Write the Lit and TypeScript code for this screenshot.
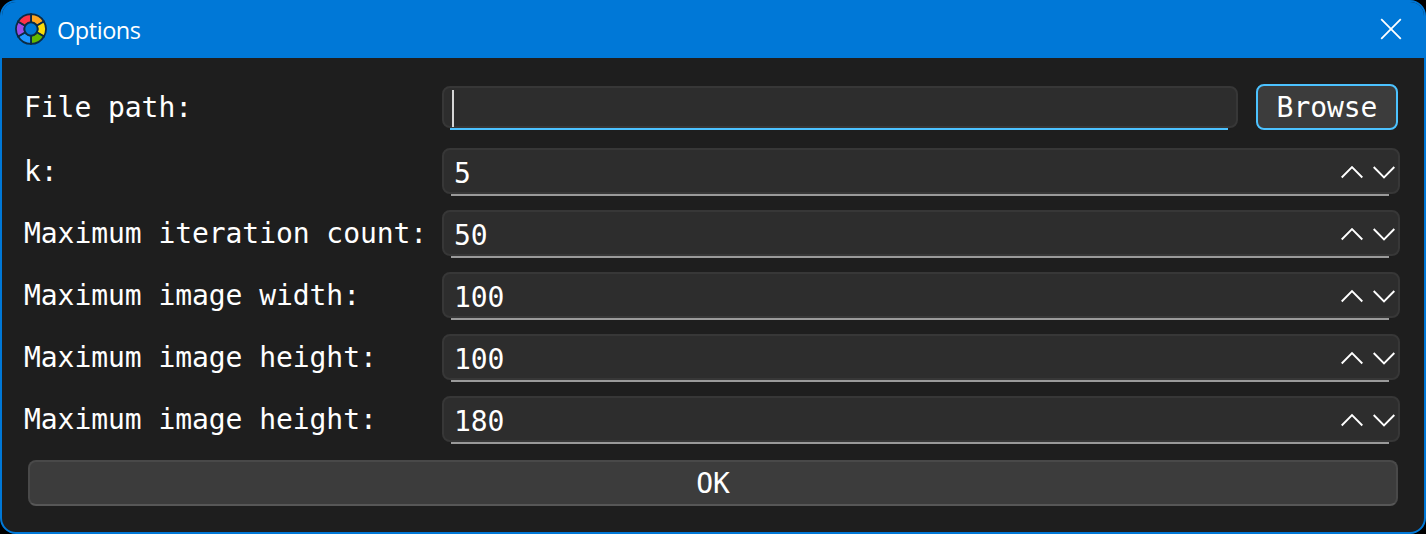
import { LitElement, html, css, svg } from "lit";
import { customElement, property } from "lit/decorators.js";

const ring = [
  ["#ffa51f", 0],
  ["#fbdc0a", 60],
  ["#63b800", 120],
  ["#1e96ff", 180],
  ["#9d4de8", 240],
  ["#ff3347", 300],
] as const;

function slice(start: number) {
  const point = (r: number, deg: number) => {
    const a = ((deg - 90) * Math.PI) / 180;
    return `${(16 + r * Math.cos(a)).toFixed(2)} ${(16 + r * Math.sin(a)).toFixed(2)}`;
  };
  const end = start + 60;
  return `M${point(6.6, start)} L${point(14.9, start)} A14.9 14.9 0 0 1 ${point(14.9, end)} L${point(6.6, end)} A6.6 6.6 0 0 0 ${point(6.6, start)}Z`;
}

@customElement("spin-field")
export class SpinField extends LitElement {
  @property() value = "";

  static styles = css`
    :host { display: block; height: 48px; }
    .box {
      box-sizing: border-box;
      height: 46px;
      border: 2px solid #373737;
      border-radius: 8px;
      background: #2d2d2d;
      display: flex;
      align-items: center;
      justify-content: space-between;
      padding: 0 2px 0 10px;
    }
    .value { box-sizing: border-box; height: 42px; padding-top: 5px; line-height: 38px; }
    .arrows { display: flex; gap: 8px; padding-top: 2px; }
    .arrows svg { display: block; width: 24px; height: 14px; }
    .line { height: 2px; margin: 0 11px 0 9px; background: #9a9a9a; }
  `;

  render() {
    return html`
      <div class="box">
        <span class="value">${this.value}</span>
        <span class="arrows">
          <svg viewBox="0 0 24 14" fill="none" stroke="#fff" stroke-width="1.9"><path d="M1.7 12.5 12 2.2 22.3 12.5" /></svg>
          <svg viewBox="0 0 24 14" fill="none" stroke="#fff" stroke-width="1.9"><path d="M1.7 2 12 12.3 22.3 2" /></svg>
        </span>
      </div>
      <div class="line"></div>
    `;
  }
}

@customElement("app-root")
export class AppRoot extends LitElement {
  private fields = [
    ["k:", "5"],
    ["Maximum iteration count:", "50"],
    ["Maximum image width:", "100"],
    ["Maximum image height:", "100"],
    ["Maximum image height:", "180"],
  ];

  static styles = css`
    :host { display: block; height: 534px; background: #000; }
    .window {
      box-sizing: border-box;
      height: 534px;
      border: 2px solid #0078d7;
      border-radius: 16px;
      overflow: hidden;
      background: #1e1e1e;
      color: #fff;
      font: 28px "DejaVu Sans Mono", monospace;
      letter-spacing: -0.06px;
    }
    .title {
      height: 56px;
      background: #0078d7;
      display: flex;
      align-items: center;
      padding: 0 22px 0 13px;
      box-sizing: border-box;
      font: 23.5px "Open Sans", sans-serif;
      letter-spacing: -0.45px;
    }
    .logo { width: 32px; height: 32px; display: block; margin-right: 10px; margin-bottom: 2px; }
    .name { flex: 1; padding-bottom: 1px; }
    .close { width: 22px; height: 22px; display: block; margin-bottom: 2px; }
    .form { padding: 26px 24px 0 22px; }
    .row { display: grid; grid-template-columns: 418px 1fr; height: 48px; margin-bottom: 14px; }
    .row.file { height: 46px; margin-bottom: 18px; }
    .label { line-height: 48px; white-space: pre; }
    .picker { display: grid; grid-template-columns: 796px 142px; gap: 18px; }
    .text { padding-top: 2px; }
    .input {
      box-sizing: border-box;
      height: 42px;
      border: 2px solid #373737;
      border-radius: 8px;
      background: #2d2d2d;
      padding: 2px 0 0 8px;
    }
    .caret { width: 2px; height: 37px; background: #d6d6d6; }
    .focus { height: 2px; margin: 0 10px 0 8px; background: #4cc2ff; }
    button {
      box-sizing: border-box;
      display: block;
      height: 46px;
      padding: 2px 0 0;
      border-radius: 8px;
      background: #3c3c3c;
      color: inherit;
      font: inherit;
      letter-spacing: inherit;
      line-height: 40px;
    }
    .browse { border: 2px solid #4cc2ff; width: 142px; }
    .ok { border: 2px solid #494949; border-bottom-color: #575757; margin: 16px 2px 0 4px; width: 1370px; }
    .form .row:last-of-type { margin-bottom: 0; }
  `;

  render() {
    return html`
      <div class="window">
        <div class="title">
          <svg class="logo" viewBox="0 0 32 32" stroke="#0b2b45" stroke-width="1.8">
            ${ring.map(([color, start]) => svg`<path fill=${color} d=${slice(start)} />`)}
            <circle cx="16" cy="16" r="6.6" fill="#0078d7" />
          </svg>
          <span class="name">Options</span>
          <svg class="close" viewBox="0 0 22 22" stroke="#fff" stroke-width="1.8"><path d="M1.2 1.2 20.8 20.8M20.8 1.2 1.2 20.8" /></svg>
        </div>
        <div class="form">
          <div class="row file">
            <span class="label">File path:</span>
            <div class="picker">
              <div class="text">
                <div class="input"><div class="caret"></div></div>
                <div class="focus"></div>
              </div>
              <button class="browse">Browse</button>
            </div>
          </div>
          ${this.fields.map(
            ([label, value]) => html`
              <div class="row">
                <span class="label">${label}</span>
                <spin-field .value=${value}></spin-field>
              </div>
            `
          )}
          <button class="ok">OK</button>
        </div>
      </div>
    `;
  }
}
